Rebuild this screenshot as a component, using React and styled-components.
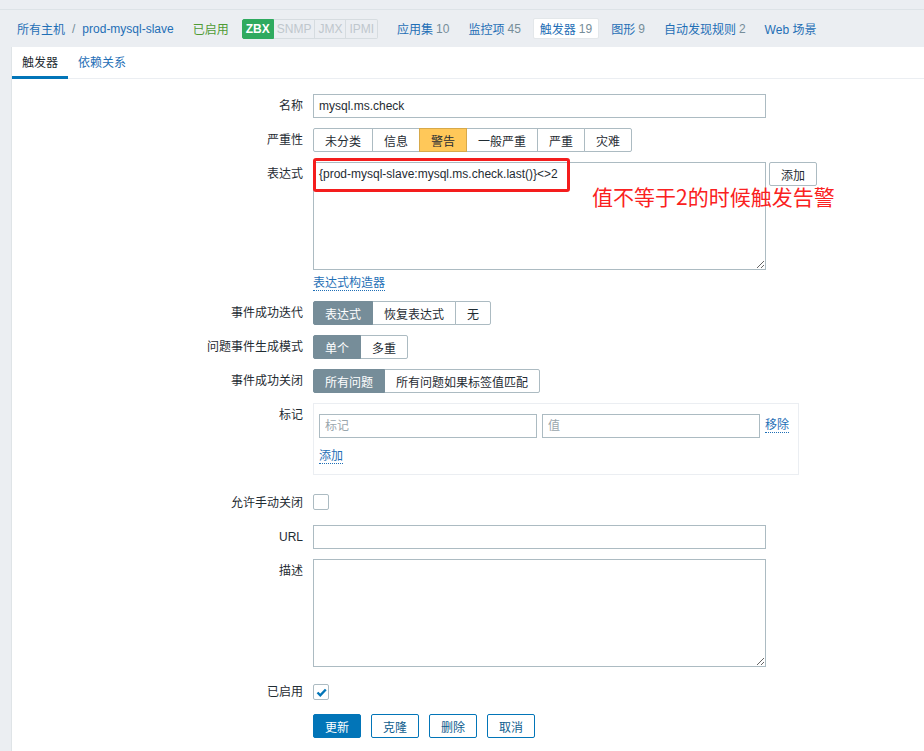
import React from "react";
import styled, { createGlobalStyle } from "styled-components";

const FONT = `"Liberation Sans", Arial, "Noto Sans CJK SC", sans-serif`;
const BLUE = "#1f6fb6";
const TEXT = "#1f2c33";
const BORDER = "#acbbc2";

const GlobalStyle = createGlobalStyle`
  html, body { margin: 0; padding: 0; }
  body {
    background: #ebeef2;
    font-family: ${FONT};
    font-size: 12px;
    color: ${TEXT};
  }
  * { box-sizing: border-box; }
`;

const Page = styled.div`
  min-height: 751px;
  display: flex;
  flex-direction: column;
`;

const TopStrip = styled.div`
  height: 10px;
  border-bottom: 1px solid #dde3e7;
`;

const HeaderNav = styled.div`
  height: 37px;
  display: flex;
  align-items: center;
  padding-left: 17px;
`;

const Crumb = styled.span`
  color: ${BLUE};
`;

const Sep = styled.span`
  color: #768d99;
  margin: 0 7px;
`;

const Enabled = styled.span`
  color: #4f9b35;
  margin-left: 19px;
  margin-right: 13px;
`;

const Badges = styled.div`
  display: flex;
  height: 20px;
  margin-right: 12px;
`;

const Badge = styled.span`
  display: flex;
  align-items: center;
  padding: 0 3px;
  font-weight: ${(p) => (p.$on ? "bold" : "normal")};
  font-size: 12px;
  color: ${(p) => (p.$on ? "#fff" : "#bfc7cd")};
  background: ${(p) => (p.$on ? "#2faa5f" : "#ebeef2")};
  border: 1px solid ${(p) => (p.$on ? "#2faa5f" : "#d6dce0")};
  border-left-width: ${(p) => (p.$first ? 1 : 0)}px;
  border-radius: ${(p) => (p.$on ? "2px 0 0 2px" : p.$last ? "0 2px 2px 0" : "0")};
`;

const NavItem = styled.span`
  display: flex;
  align-items: center;
  height: 21px;
  padding: 0 6px;
  margin-right: 5px;
  color: ${BLUE};
  background: ${(p) => (p.$active ? "#fff" : "transparent")};
  border: 1px solid ${(p) => (p.$active ? "#e3e7ea" : "transparent")};
  border-radius: 2px;
`;

const Count = styled.span`
  color: #768d99;
  margin-left: 3px;
`;

const Panel = styled.div`
  flex: 1;
  margin-left: 11px;
  background: #fff;
  border-left: 1px solid #dfe4e7;
`;

const TabBar = styled.div`
  display: flex;
  height: 32px;
  border-bottom: 1px solid #ebeef2;
`;

const Tab = styled.div`
  display: flex;
  align-items: center;
  height: 32px;
  padding: 0 10px;
  margin-bottom: -1px;
  color: ${(p) => (p.$active ? TEXT : BLUE)};
  border-bottom: 3px solid ${(p) => (p.$active ? "#0275b8" : "transparent")};
`;

const Form = styled.div`
  display: grid;
  grid-template-columns: 291px 1fr;
  column-gap: 10px;
  row-gap: 10px;
  padding-top: 15px;
  padding-bottom: 20px;
`;

const Label = styled.div`
  text-align: right;
  line-height: 24px;
  padding-top: ${(p) => p.$pt || 0}px;
  white-space: nowrap;
`;

const Field = styled.div`
  position: relative;
  display: flex;
  flex-direction: ${(p) => (p.$col ? "column" : "row")};
  align-items: flex-start;
  padding-top: ${(p) => p.$pt || 0}px;
  padding-bottom: ${(p) => p.$pb || 0}px;
`;

const TextInput = styled.input`
  width: ${(p) => p.$w || 453}px;
  height: 24px;
  border: 1px solid ${BORDER};
  padding: 0 5px;
  font-family: ${FONT};
  font-size: 12px;
  color: ${TEXT};
  background: #fff;
  outline: none;
  &::placeholder { color: #9aa6ad; }
`;

const TextArea = styled.textarea`
  width: 453px;
  height: 108px;
  border: 1px solid ${BORDER};
  padding: 4px 5px;
  font-family: ${FONT};
  font-size: 12px;
  color: ${TEXT};
  background: #fff;
  outline: none;
  resize: both;
  display: block;
`;

const ExprRow = styled.div`
  display: flex;
  align-items: flex-start;
`;

const Segmented = styled.div`
  display: flex;
  height: 24px;
`;

const Seg = styled.div`
  display: flex;
  align-items: center;
  padding: 0 11px;
  border: 1px solid ${BORDER};
  margin-left: -1px;
  &:first-child { margin-left: 0; border-radius: 2px 0 0 2px; }
  &:last-child { border-radius: 0 2px 2px 0; }
  background: ${(p) => p.$bg || "#fff"};
  color: ${(p) => p.$fg || TEXT};
  border-color: ${(p) => p.$bc || BORDER};
  position: relative;
  z-index: ${(p) => (p.$bc ? 1 : 0)};
`;

const SmallButton = styled.button`
  height: 24px;
  padding: 0 11px;
  margin-left: 3px;
  border: 1px solid ${BORDER};
  border-radius: 2px;
  background: #fff;
  font-family: ${FONT};
  font-size: 12px;
  color: ${TEXT};
`;

const DottedLink = styled.span`
  color: ${BLUE};
  border-bottom: 1px dotted ${BLUE};
  line-height: 13px;
  margin-top: ${(p) => p.$mt || 0}px;
  white-space: nowrap;
`;

const Highlight = styled.div`
  position: absolute;
  left: 0;
  top: -4px;
  width: 257px;
  height: 34px;
  border: 3px solid #f41d1d;
  border-radius: 3px;
  pointer-events: none;
`;

const Note = styled.div`
  position: absolute;
  left: 279px;
  top: 20px;
  font-family: "Noto Sans CJK SC", sans-serif;
  font-size: 21px;
  line-height: 28px;
  color: #fa2121;
  white-space: nowrap;
`;

const TagsBox = styled.div`
  width: 486px;
  border: 1px solid #ebeef2;
  padding: 10px 5px 10px;
  display: flex;
  flex-direction: column;
  gap: 12px;
`;

const TagRow = styled.div`
  display: flex;
  align-items: center;
  gap: 5px;
`;

const CheckBox = styled.span`
  width: 16px;
  height: 16px;
  border: 1px solid ${BORDER};
  border-radius: 2px;
  background: #fff;
  display: flex;
  align-items: center;
  justify-content: center;
`;

const Buttons = styled.div`
  display: flex;
  gap: 10px;
`;

const Btn = styled.button`
  height: 24px;
  padding: 0 11px;
  border-radius: 2px;
  font-family: ${FONT};
  font-size: 12px;
  border: 1px solid #0275b8;
  background: ${(p) => (p.$primary ? "#0275b8" : "#fff")};
  color: ${(p) => (p.$primary ? "#fff" : "#0e5d8e")};
`;

const Check = () => (
  <svg width="11" height="9" viewBox="0 0 11 9">
    <path d="M1.5 4.5 L4.3 7.3 L9.8 1.5" fill="none" stroke="#0275b8" strokeWidth="2.4" />
  </svg>
);

export default function App() {
  return (
    <Page>
      <GlobalStyle />
      <TopStrip />
      <HeaderNav>
        <Crumb>所有主机</Crumb>
        <Sep>/</Sep>
        <Crumb>prod-mysql-slave</Crumb>
        <Enabled>已启用</Enabled>
        <Badges>
          <Badge $on $first>ZBX</Badge>
          <Badge>SNMP</Badge>
          <Badge>JMX</Badge>
          <Badge $last>IPMI</Badge>
        </Badges>
        <NavItem>应用集<Count>10</Count></NavItem>
        <NavItem>监控项<Count>45</Count></NavItem>
        <NavItem $active>触发器<Count>19</Count></NavItem>
        <NavItem>图形<Count>9</Count></NavItem>
        <NavItem>自动发现规则<Count>2</Count></NavItem>
        <NavItem>Web 场景</NavItem>
      </HeaderNav>
      <Panel>
        <TabBar>
          <Tab $active>触发器</Tab>
          <Tab>依赖关系</Tab>
        </TabBar>
        <Form>
          <Label>名称</Label>
          <Field>
            <TextInput defaultValue="mysql.ms.check" />
          </Field>

          <Label>严重性</Label>
          <Field>
            <Segmented>
              <Seg>未分类</Seg>
              <Seg>信息</Seg>
              <Seg $bg="#ffc859" $bc="#d7a94a">警告</Seg>
              <Seg>一般严重</Seg>
              <Seg>严重</Seg>
              <Seg>灾难</Seg>
            </Segmented>
          </Field>

          <Label>表达式</Label>
          <Field $col>
            <ExprRow>
              <TextArea defaultValue="{prod-mysql-slave:mysql.ms.check.last()}<>2" />
              <SmallButton>添加</SmallButton>
            </ExprRow>
            <DottedLink $mt={7}>表达式构造器</DottedLink>
            <Highlight />
            <Note>值不等于2的时候触发告警</Note>
          </Field>

          <Label>事件成功迭代</Label>
          <Field>
            <Segmented>
              <Seg $bg="#768d99" $fg="#fff" $bc="#768d99">表达式</Seg>
              <Seg>恢复表达式</Seg>
              <Seg>无</Seg>
            </Segmented>
          </Field>

          <Label>问题事件生成模式</Label>
          <Field>
            <Segmented>
              <Seg $bg="#768d99" $fg="#fff" $bc="#768d99">单个</Seg>
              <Seg>多重</Seg>
            </Segmented>
          </Field>

          <Label>事件成功关闭</Label>
          <Field>
            <Segmented>
              <Seg $bg="#768d99" $fg="#fff" $bc="#768d99">所有问题</Seg>
              <Seg>所有问题如果标签值匹配</Seg>
            </Segmented>
          </Field>

          <Label>标记</Label>
          <Field>
            <TagsBox>
              <TagRow>
                <TextInput $w={218} placeholder="标记" />
                <TextInput $w={218} placeholder="值" />
                <DottedLink>移除</DottedLink>
              </TagRow>
              <TagRow>
                <DottedLink>添加</DottedLink>
              </TagRow>
            </TagsBox>
          </Field>

          <Label $pt={6}>允许手动关闭</Label>
          <Field $pt={9} $pb={4}>
            <CheckBox />
          </Field>

          <Label>URL</Label>
          <Field>
            <TextInput />
          </Field>

          <Label>描述</Label>
          <Field>
            <TextArea />
          </Field>

          <Label $pt={3}>已启用</Label>
          <Field $pt={7} $pb={3}>
            <CheckBox>
              <Check />
            </CheckBox>
          </Field>

          <div />
          <Field>
            <Buttons>
              <Btn $primary>更新</Btn>
              <Btn>克隆</Btn>
              <Btn>删除</Btn>
              <Btn>取消</Btn>
            </Buttons>
          </Field>
        </Form>
      </Panel>
    </Page>
  );
}
